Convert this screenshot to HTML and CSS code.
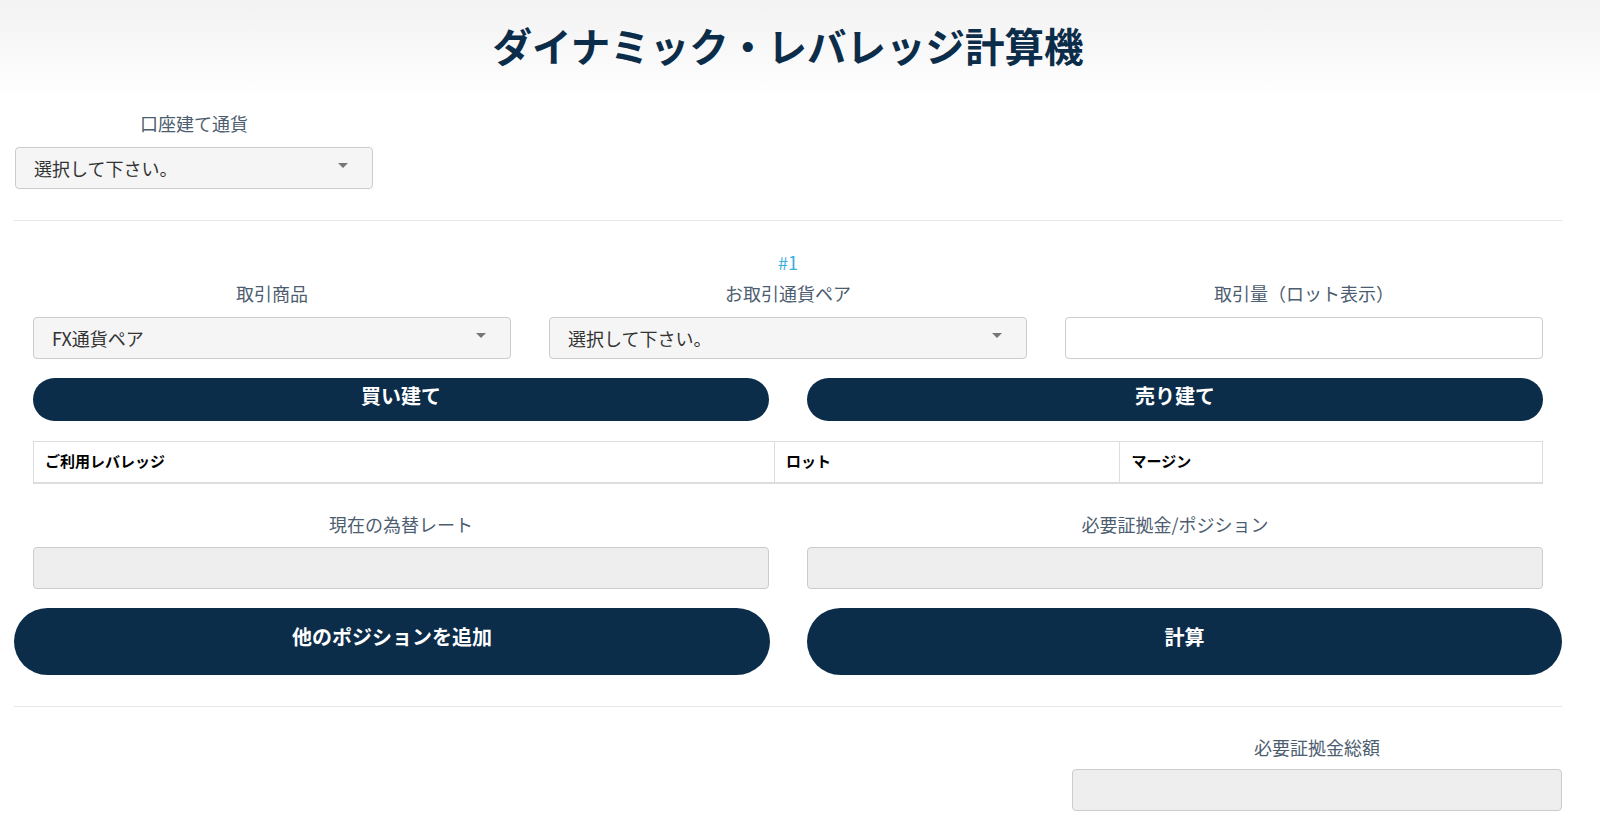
FILE: index.html
```html
<!DOCTYPE html>
<html lang="ja">
<head>
    <meta charset="UTF-8">
    <meta name="viewport" content="width=device-width, initial-scale=1.0">
    <title>ダイナミック・レバレッジ計算機</title>
    <link rel="stylesheet" href="styles.css">
</head>
<body>
    <header class="page-head">
        <h1 class="page-title">ダイナミック・レバレッジ計算機</h1>
    </header>

    <main class="calc">
        <!-- account currency -->
        <div class="base">
            <label class="field-label" for="base-ccy">口座建て通貨</label>
            <div class="select-wrap">
                <select id="base-ccy" class="field-select">
                    <option>選択して下さい。</option>
                    <option>JPY</option>
                    <option>USD</option>
                    <option>EUR</option>
                </select>
            </div>
        </div>

        <hr class="divider">

        <!-- position #1 -->
        <section class="position">
            <div class="pos-no">#1</div>
            <div class="cols3">
                <div class="col">
                    <label class="field-label">取引商品</label>
                    <div class="select-wrap">
                        <select class="field-select">
                            <option>FX通貨ペア</option>
                            <option>株価指数</option>
                            <option>商品</option>
                        </select>
                    </div>
                </div>
                <div class="col">
                    <label class="field-label">お取引通貨ペア</label>
                    <div class="select-wrap">
                        <select class="field-select">
                            <option>選択して下さい。</option>
                            <option>USD/JPY</option>
                            <option>EUR/USD</option>
                        </select>
                    </div>
                </div>
                <div class="col">
                    <label class="field-label">取引量（ロット表示）</label>
                    <input type="text" class="field-input">
                </div>
            </div>

            <div class="cols2 side-row">
                <div class="col"><button class="btn-side">買い建て</button></div>
                <div class="col"><button class="btn-side">売り建て</button></div>
            </div>

            <div class="table-wrap">
                <table class="lev-table">
                    <thead>
                        <tr>
                            <th class="c-lev">ご利用レバレッジ</th>
                            <th class="c-lot">ロット</th>
                            <th class="c-margin">マージン</th>
                        </tr>
                    </thead>
                </table>
            </div>

            <div class="cols2 result-row">
                <div class="col">
                    <label class="field-label">現在の為替レート</label>
                    <input type="text" class="field-input readonly" readonly>
                </div>
                <div class="col">
                    <label class="field-label">必要証拠金/ポジション</label>
                    <input type="text" class="field-input readonly" readonly>
                </div>
            </div>
        </section>

        <div class="cols2 actions">
            <div class="col"><button class="btn-big">他のポジションを追加</button></div>
            <div class="col"><button class="btn-big">計算</button></div>
        </div>

        <hr class="divider divider-bottom">

        <div class="cols3 total">
            <div class="col total-col">
                <label class="field-label">必要証拠金総額</label>
                <input type="text" class="field-input readonly" readonly>
            </div>
        </div>
    </main>
</body>
</html>
```

FILE: styles.css
```css
body {
    margin: 0;
    font-family: "Noto Sans CJK JP", "Noto Sans", sans-serif;
    color: #333;
    background: #fff;
}

.page-head {
    height: 100px;
    padding: 0 38px 0 14px;
    background: linear-gradient(#f2f2f2, #ffffff);
    text-align: center;
}
.page-title {
    margin: 0;
    padding-top: 21px;
    font-size: 39.5px;
    line-height: 48px;
    font-weight: bold;
    color: #0c2d4a;
}

.calc {
    padding: 0 38px 30px 14px;
}

.field-label {
    display: block;
    text-align: center;
    font-size: 18px;
    line-height: 23px;
    color: #4d5d70;
    margin-bottom: 12px;
}

/* selects with a small grey caret */
.select-wrap {
    position: relative;
}
.select-wrap::after {
    content: "";
    position: absolute;
    right: 25px;
    top: 16px;
    border-left: 5px solid transparent;
    border-right: 5px solid transparent;
    border-top: 5px solid #777;
    pointer-events: none;
}
.field-select {
    display: block;
    width: 100%;
    height: 42px;
    padding: 0 18px;
    -webkit-appearance: none;
    appearance: none;
    background: #f5f5f5;
    border: 1px solid #ccc;
    border-radius: 4px;
    font-family: inherit;
    font-size: 18px;
    color: #333;
}
.field-input {
    display: block;
    box-sizing: border-box;
    width: 100%;
    height: 42px;
    padding: 0 12px;
    background: #fff;
    border: 1px solid #ccc;
    border-radius: 4px;
    font-family: inherit;
    font-size: 18px;
}
.field-input.readonly {
    background: #eee;
}

.base {
    width: 358px;
    margin-left: 1px;
    padding-top: 12px;
}

.divider {
    border: 0;
    border-top: 1px solid #e6e6e6;
    margin: 31px 0 0;
}

.pos-no {
    margin-top: 30px;
    text-align: center;
    font-size: 18px;
    line-height: 22px;
    color: #3aaee0;
    margin-bottom: 9px;
}

.cols3 {
    display: grid;
    grid-template-columns: repeat(3, 1fr);
}
.cols2 {
    display: grid;
    grid-template-columns: repeat(2, 1fr);
}
.col {
    padding: 0 19px;
}

.side-row {
    margin-top: 19px;
}
.btn-side {
    display: block;
    width: 100%;
    height: 43px;
    padding: 0 0 9px;
    border: none;
    border-radius: 22px;
    background: #0c2d4a;
    color: #fff;
    font-family: inherit;
    font-size: 20px;
    font-weight: bold;
    cursor: pointer;
}

.table-wrap {
    padding: 0 19px;
    margin-top: 20px;
}
.lev-table {
    width: 100%;
    border-collapse: collapse;
    border: 1px solid #ddd;
}
.lev-table th {
    height: 37px;
    padding: 0 11px 3px;
    text-align: left;
    font-size: 15px;
    font-weight: bold;
    color: #000;
    border-left: 1px solid #ddd;
    border-bottom: 2px solid #ddd;
}
.c-lev { width: 49.1%; }
.c-lot { width: 22.9%; }
.c-margin { width: 28%; }

.result-row {
    margin-top: 29px;
}
.result-row .field-label {
    margin-bottom: 11px;
}

.actions {
    margin-top: 19px;
}
.actions .col:first-child {
    padding: 0 18px 0 0;
}
.actions .col:last-child {
    padding: 0 0 0 19px;
}
.btn-big {
    display: block;
    width: 100%;
    height: 67px;
    padding: 0 0 11px;
    border: none;
    border-radius: 40px;
    background: #0c2d4a;
    color: #fff;
    font-family: inherit;
    font-size: 20px;
    font-weight: bold;
    cursor: pointer;
}

.total {
    margin-top: 29px;
}
.total-col {
    grid-column: 3;
    padding: 0 0 0 26px;
}
.total .field-label {
    margin-bottom: 10px;
}
```
